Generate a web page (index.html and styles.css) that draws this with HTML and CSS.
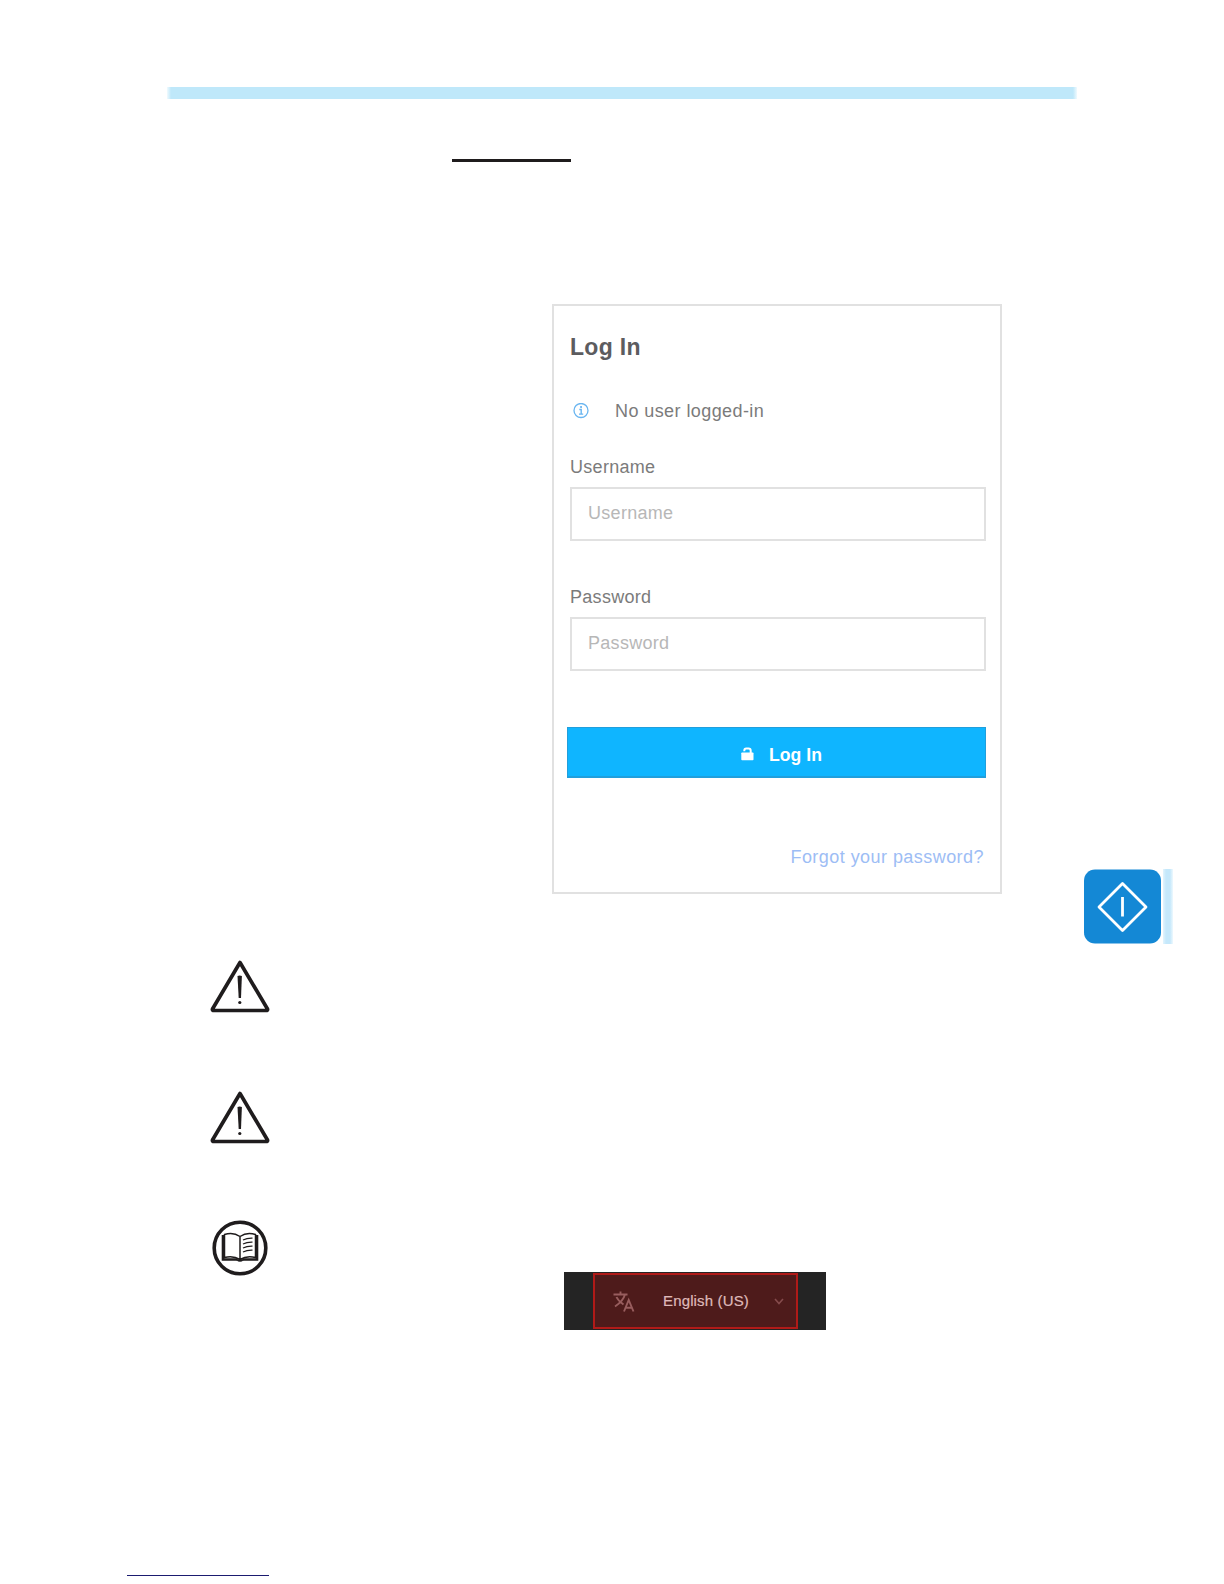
FILE: index.html
```html
<!DOCTYPE html>
<html lang="en">
<head>
<meta charset="utf-8">
<title>Log In</title>
<link rel="stylesheet" href="styles.css">
</head>
<body>
<div class="page">
  <div class="top-rule"></div>
  <div class="heading-rule"></div>

  <div class="main-row">
    <form class="card">
      <h1 class="title">Log In</h1>
      <div class="status">
        <svg class="info" width="16" height="16" viewBox="0 0 16 16" fill="none" stroke="#69b5f0"><circle cx="8" cy="7.500" r="7" stroke-width="1.3"/><path d="M6.300 6.500h1.900v4.500M6 11.100h4.200" stroke-width="1.400"/><path d="M7.200 4h1.700" stroke-width="1.800"/></svg>
        <span>No user logged-in</span>
      </div>
      <label class="label" for="user">Username</label>
      <input class="field" id="user" type="text" placeholder="Username">
      <label class="label label-second" for="pass">Password</label>
      <input class="field" id="pass" type="password" placeholder="Password">
      <button class="submit" type="button">
        <svg class="lock" width="13" height="14" viewBox="0 0 13 14"><path d="M3.300 4.300V3.500a2 2 0 0 1 2-2h2.200a2.200 2.200 0 0 1 2.200 2.200V7" fill="none" stroke="#fff" stroke-width="2"/><rect x="0.300" y="5.500" width="12.200" height="7.800" rx="0.800" fill="#fff"/></svg>
        <span>Log In</span>
      </button>
      <a class="forgot">Forgot your password?</a>
    </form>
    <div class="tab">
      <svg width="77" height="75" viewBox="0 0 77 75"><rect y="0.500" width="77" height="74" rx="11" fill="#1488d5"/><path d="M38.500 14.500L62 38L38.500 61.500L15 38Z" fill="none" stroke="#fff" stroke-width="2.800" stroke-linejoin="round"/><path d="M38.500 28V47.500" stroke="#fff" stroke-width="2.800"/></svg>
      <div class="tab-edge"></div>
    </div>
  </div>

  <div class="notes">
    <svg width="60" height="54" viewBox="0 0 60 54"><path d="M30 2.500L57.500 49Q58 50.500 56 50.500H4Q2 50.500 2.500 49Z" fill="none" stroke="#1f1c1d" stroke-width="3.700" stroke-linejoin="round"/><path d="M27.500 16q2.200-1 4.400 0L31 38h-2.300Z" fill="#1f1c1d"/><circle cx="29.800" cy="42.500" r="1.600" fill="#1f1c1d"/></svg>
    <svg width="60" height="54" viewBox="0 0 60 54"><path d="M30 2.500L57.500 49Q58 50.500 56 50.500H4Q2 50.500 2.500 49Z" fill="none" stroke="#1f1c1d" stroke-width="3.700" stroke-linejoin="round"/><path d="M27.500 16q2.200-1 4.400 0L31 38h-2.300Z" fill="#1f1c1d"/><circle cx="29.800" cy="42.500" r="1.600" fill="#1f1c1d"/></svg>
  </div>

  <div class="language-row">
    <svg width="56" height="56" viewBox="0 0 56 56" fill="none" stroke="#1f1c1d"><circle cx="28" cy="28" r="25.800" stroke-width="3.600"/><path d="M28 16.500C23 13 17 13 12.500 14.500V37.500C18 36 24 37 28 39.500C32 37 38 36 43.500 37.500V14.500C39 13 33 13 28 16.500V39.500" stroke-width="1.500"/><path d="M11 15V39.500H25M45 15V39.500H31" stroke-width="2.600"/><path d="M25 39.500q3 2.500 6 0" stroke-width="2"/><path d="M31 20q4-2 9.500-1.800M31 24q4-2 9.500-1.800M31 28q4-2 9.500-1.800M31 32q4-2 9.500-1.800" stroke-width="1.300"/></svg>
    <div class="language-bar">
      <div class="language">
        <svg width="22" height="21" viewBox="0 0 22 21" fill="none" stroke="#985d5e" stroke-width="1.900"><path d="M.5 3.500H14.500M7.500.5V3.500M12 3.500C10.500 9 6.500 12.500 2 15.500M3.500 6C5 9.500 7.500 11.500 10.500 13.500M11 20.500L15.700 9L20.500 20.500M12.700 16.700H18.700"/></svg>
        <span class="language-name">English (US)</span>
        <svg width="10" height="7" viewBox="0 0 10 7" fill="none" stroke="#854b4c" stroke-width="1.600"><path d="M1 1L5 5.500L9 1"/></svg>
      </div>
    </div>
  </div>
  <div class="footer-rule"></div>
</div>
</body>
</html>
```
FILE: styles.css
```css
* { box-sizing: border-box; }
body { margin: 0; background: #fff; }
svg { display: block; flex: none; }
.page {
  width: 1224px;
  height: 1584px;
  padding-top: 87px;
  overflow: hidden;
  display: flex;
  flex-direction: column;
  align-items: flex-start;
  font: 18px/20px "Liberation Sans", Arial, sans-serif;
}
.top-rule {
  width: 910px;
  height: 12px;
  margin-left: 167px;
  background: linear-gradient(90deg, #f0fafe, #bfe8fa 4px, #bfe8fa 906px, #f0fafe);
}
.heading-rule {
  width: 119px;
  height: 3px;
  margin: 60px 0 0 452px;
  background: #1f1c1d;
}
.main-row {
  height: 640px;
  margin: 142px 0 0 552px;
  display: flex;
  gap: 82px;
}
.card {
  width: 450px;
  height: 590px;
  padding: 28px 14px 0 13px;
  border: 2px solid #e1e1e1;
  display: flex;
  flex-direction: column;
}
.title {
  margin: 0 0 0 3px;
  font-size: 23px;
  line-height: 26px;
  letter-spacing: 0.3px;
  color: #5c5c5f;
}
.status {
  margin: 41px 0 0 6px;
  display: flex;
  align-items: center;
  gap: 26px;
  letter-spacing: 0.42px;
  color: #7b7b7b;
}
.label {
  margin: 36px 0 10px 3px;
  letter-spacing: 0.3px;
  color: #7b7b7b;
}
.label-second { margin-top: 46px; }
.field {
  height: 54px;
  margin: 0 0 0 3px;
  padding: 0 16px 1px;
  border: 2px solid #e1e1e1;
  border-radius: 0;
  background: #fff;
  font: inherit;
  letter-spacing: 0.3px;
}
.field::placeholder { color: #b7b7b7; opacity: 1; }
.submit {
  height: 51px;
  margin: 56px 0 0;
  padding: 6px 0 0 10px;
  border: 1px solid #219fdc;
  border-bottom-width: 2px;
  background: #0fb5ff;
  color: #fff;
  font: bold 17.6px/20px "Liberation Sans", Arial, sans-serif;
  display: flex;
  align-items: center;
  justify-content: center;
  gap: 15px;
}
.lock { margin-bottom: 3px; }
.forgot {
  align-self: flex-end;
  margin: 69px 2px 0 0;
  letter-spacing: 0.45px;
  color: #9dbdf5;
}
.tab {
  align-self: flex-end;
  display: flex;
  gap: 2px;
}
.tab-edge {
  width: 10px;
  height: 75px;
  background: linear-gradient(90deg, #e2f4fd, #c5e8fb 3px 7px, #eef9fe);
}
.notes {
  margin: 16px 0 0 210px;
  display: grid;
  gap: 77px;
}
.language-row {
  height: 110px;
  margin: 75px 0 0 212px;
  display: flex;
  gap: 296px;
}
.language-bar {
  align-self: flex-end;
  width: 262px;
  height: 58px;
  padding: 1px 28px 1px 29px;
  background: #242424;
}
.language {
  height: 56px;
  padding: 0 12px 0 18px;
  border: 2px solid #b11a18;
  background: #4e1b1b;
  display: flex;
  align-items: center;
  color: #dfb9b9;
  font-size: 15px;
  letter-spacing: 0.15px;
}
.language-name { flex: 1; padding-left: 28px; -webkit-text-stroke: 0.2px; }
.footer-rule {
  width: 142px;
  height: 1px;
  margin: 245px 0 0 127px;
  background: #1b1b70;
}
```
